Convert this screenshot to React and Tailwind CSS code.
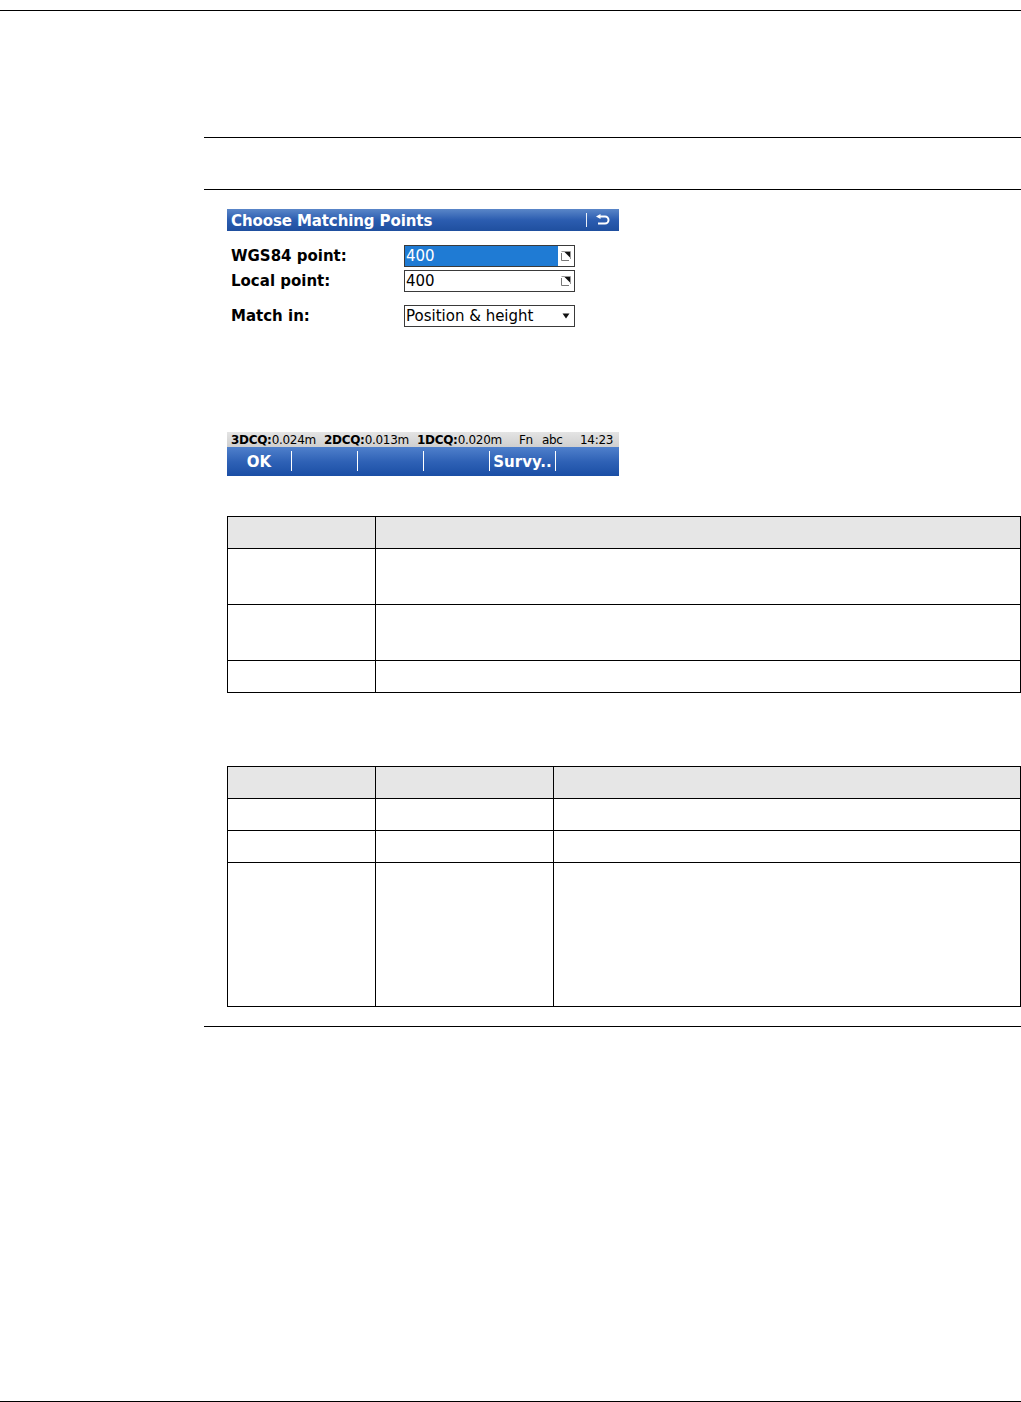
import React from "react";

function PickIcon() {
    return (
        <svg width="10" height="10" viewBox="0 0 10 10" className="block">
            <path d="M0.5 2 V9.5 H8" fill="none" stroke="#777" strokeWidth="1" />
            <path d="M0.5 0.5 H9.5 V8" fill="none" stroke="#999" strokeWidth="1" />
            <path d="M3.5 1 H9 V6.5 Z" fill="#111" />
        </svg>
    );
}

function BackIcon() {
    return (
        <svg width="14" height="12" viewBox="0 0 14 12" className="block">
            <path d="M3 2.5 H9 A3.5 3.5 0 0 1 9 9.5 H2" fill="none" stroke="white" strokeWidth="2" />
            <path d="M0 2.5 L4.5 0 V5 Z" fill="white" />
        </svg>
    );
}

function Field({ value, selected, icon = "pick" }) {
    return (
        <div className="w-[171px] h-[22px] border border-[#3a3a3a] flex items-center bg-white text-[15px]">
            <div className={`flex-1 h-full flex items-center pl-[1px] ${selected ? 'bg-[#1f7bd4] text-white' : 'text-black'}`}>
                {value}
            </div>
            <div className="w-[16px] h-full flex items-center justify-center">
                {icon === "pick" ? <PickIcon /> : (
                    <svg width="8" height="6" viewBox="0 0 8 6" className="block">
                        <path d="M0.5 0.5 H7.5 L4 5.5 Z" fill="#111" />
                    </svg>
                )}
            </div>
        </div>
    );
}

function Row({ h, cols, last, gray }) {
    return (
        <div className={`${h} flex ${last ? '' : 'border-b border-black'} ${gray ? 'bg-[#e6e6e6]' : ''}`}>
            {cols.map((c, i) => (
                <div key={i} className={`${c} ${i < cols.length - 1 ? 'border-r border-black' : ''}`} />
            ))}
        </div>
    );
}

export default function App() {
    const softkeys = ["OK", "", "", "", "Survy..", ""];
    const keyWidths = ["w-[65px]", "w-[66px]", "w-[66px]", "w-[66px]", "w-[66px]", "flex-1"];
    const cols2 = ["w-[148px]", "flex-1"];
    const cols3 = ["w-[148px]", "w-[178px]", "flex-1"];

    return (
        <div className="w-[1021px] h-[1402px] bg-white flex flex-col font-['DejaVu_Sans',sans-serif]">
            <div className="h-[10px]" />
            <div className="h-px bg-black" />
            <div className="ml-[204px] mt-[126px] h-px bg-black" />
            <div className="ml-[204px] mt-[51px] h-px bg-black" />

            {/* device screen */}
            <div className="ml-[227px] mt-[19px] w-[392px] flex flex-col">
                <div className="h-[22px] bg-gradient-to-b from-[#5a86c8] via-[#2c5db0] to-[#1f4f9f] flex items-center text-white">
                    <span className="pl-[4px] pt-[2px] text-[15px] font-bold tracking-[-0.1px] flex-1">Choose Matching Points</span>
                    <div className="w-px h-[14px] bg-white/90" />
                    <div className="w-[32px] flex justify-center"><BackIcon /></div>
                </div>

                <div className="pl-[4px] mt-[14px]">
                    <div className="flex items-center">
                        <span className="w-[173px] font-bold text-[15px]">WGS84 point:</span>
                        <Field value="400" selected />
                    </div>
                    <div className="flex items-center mt-[2px]">
                        <span className="w-[173px] font-bold text-[15px]">Local point:</span>
                        <Field value="400" />
                    </div>
                    <div className="flex items-center mt-[13px]">
                        <span className="w-[173px] font-bold text-[15px]">Match in:</span>
                        <Field value="Position & height" icon="drop" />
                    </div>
                </div>

                <div className="mt-[104px] h-[15px] bg-gradient-to-b from-[#e4e4e4] to-[#cfcfcf] flex items-end pb-[1px] text-[12px] leading-none text-black pl-[4px] tracking-[-0.3px]">
                    <span className="w-[93px]"><b>3DCQ:</b>0.024m</span>
                    <span className="w-[93px]"><b>2DCQ:</b>0.013m</span>
                    <span className="w-[102px]"><b>1DCQ:</b>0.020m</span>
                    <span className="w-[23px]">Fn</span>
                    <span className="w-[38px]">abc</span>
                    <span>14:23</span>
                </div>
                <div className="h-[29px] bg-gradient-to-b from-[#4f80cc] via-[#2f62b6] to-[#1a4ea5] flex items-center">
                    {softkeys.map((k, i) => (
                        <div key={i} className={`${keyWidths[i]} h-full flex items-center`}>
                            <span className="flex-1 text-center text-white font-bold text-[15px] pt-[3px]">{k}</span>
                            {i < 5 && <div className="w-px h-[20px] bg-white" />}
                        </div>
                    ))}
                </div>
            </div>

            {/* table 1 */}
            <div className="ml-[227px] mt-[40px] border border-black">
                <Row h="h-[32px]" cols={cols2} gray />
                <Row h="h-[56px]" cols={cols2} />
                <Row h="h-[56px]" cols={cols2} />
                <Row h="h-[31px]" cols={cols2} last />
            </div>

            {/* table 2 */}
            <div className="ml-[227px] mt-[73px] border border-black">
                <Row h="h-[32px]" cols={cols3} gray />
                <Row h="h-[32px]" cols={cols3} />
                <Row h="h-[32px]" cols={cols3} />
                <Row h="h-[143px]" cols={cols3} last />
            </div>

            <div className="ml-[204px] mt-[19px] h-px bg-black" />

            <div className="mt-auto h-px bg-black" />
        </div>
    );
}
